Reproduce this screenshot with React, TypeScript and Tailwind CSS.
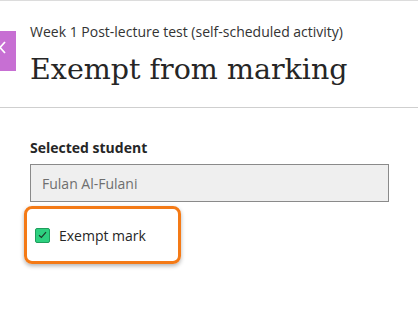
export default function App() {
  return (
    <div className="relative h-[316px] w-[418px] overflow-hidden bg-white font-['Open_Sans',sans-serif] text-[#262626]">
      <div className="h-px w-full bg-[#dcdcdc]" />

      {/* clipped close tab */}
      <div className="absolute left-0 top-[31px] h-[40px] w-[16px] bg-[#c76fd3]">
        <svg width="12" height="13" viewBox="0 0 12 13" className="absolute -left-[6px] top-[10px]">
          <path d="M1 1 L11 12 M11 1 L1 12" stroke="white" strokeWidth="1.8" fill="none" />
        </svg>
      </div>

      <header className="border-b border-[#cfcfcf] pb-[18px] pl-[30px] pt-[21px]">
        <p className="text-[14px] leading-[20px] text-[#333]">Week 1 Post-lecture test (self-scheduled activity)</p>
        <h1 className="mt-[9px] font-['DejaVu_Serif',serif] text-[28.5px] leading-[38px] text-[#262626]">
          Exempt from marking
        </h1>
      </header>

      <main className="px-[30px] pt-[30px]">
        <label className="block text-[14px] font-bold leading-[20px] text-[#262626]">Selected student</label>
        <div className="mt-[6px] flex h-[38px] w-[359px] items-center border border-[#8a8a8a] bg-[#efefef] px-[11px] text-[14px] text-[#6e6e6e]">
          Fulan Al-Fulani
        </div>

        <div className="-ml-[6px] mt-[4px] flex h-[58px] w-[157px] items-center gap-[9px] rounded-[8px] border-[3px] border-[#f47a16] pl-[8px] shadow-[0_2px_4px_rgba(0,0,0,0.3)]">
          <span className="flex h-[15px] w-[15px] items-center justify-center rounded-[2px] border border-[#1f9d5c] bg-[#2dd07f]">
            <svg width="9" height="8" viewBox="0 0 9 8">
              <path d="M1 4.2 L3.4 6.4 L8 1.2" stroke="#1c3b2a" strokeWidth="1.2" fill="none" />
            </svg>
          </span>
          <span className="text-[14px] text-[#262626]">Exempt mark</span>
        </div>
      </main>
    </div>
  );
}
